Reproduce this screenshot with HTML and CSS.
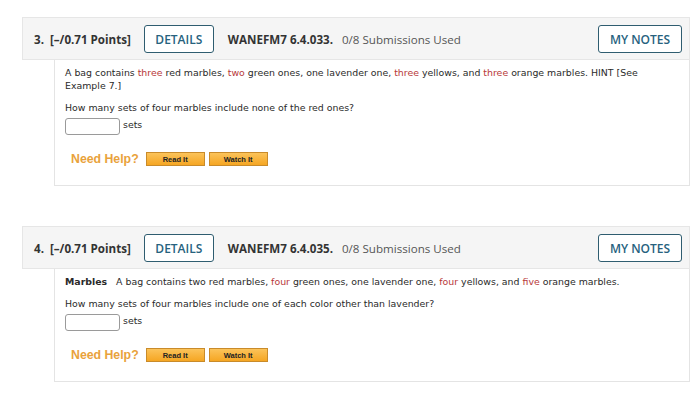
FILE: index.html
```html
<!DOCTYPE html>
<html lang="en">

<head>
    <meta charset="UTF-8">
    <title>Questions</title>
    <link rel="stylesheet" href="styles.css">
</head>

<body>
    <div class="question">
        <div class="q-header">
            <span class="q-points">3.&nbsp; [&ndash;/0.71 Points]</span>
            <button class="btn-outline details">DETAILS</button>
            <span class="q-code">WANEFM7 6.4.033.</span>
            <span class="q-subs">0/8 Submissions Used</span>
            <button class="btn-outline notes">MY NOTES</button>
        </div>
        <div class="q-body">
            <p>A bag contains <span class="red">three</span> red marbles, <span class="red">two</span> green ones, one lavender one, <span class="red">three</span> yellows, and <span class="red">three</span> orange marbles. HINT [See Example 7.]</p>
            <p class="prompt">How many sets of four marbles include none of the red ones?</p>
            <div class="answer">
                <input type="text" class="answer-box">
                <span>sets</span>
            </div>
            <div class="help">
                <span class="help-label">Need Help?</span>
                <button class="help-btn">Read It</button>
                <button class="help-btn">Watch It</button>
            </div>
        </div>
    </div>

    <div class="question">
        <div class="q-header">
            <span class="q-points">4.&nbsp; [&ndash;/0.71 Points]</span>
            <button class="btn-outline details">DETAILS</button>
            <span class="q-code">WANEFM7 6.4.035.</span>
            <span class="q-subs">0/8 Submissions Used</span>
            <button class="btn-outline notes">MY NOTES</button>
        </div>
        <div class="q-body">
            <p><b>Marbles</b>&nbsp;&nbsp; A bag contains two red marbles, <span class="red">four</span> green ones, one lavender one, <span class="red">four</span> yellows, and <span class="red">five</span> orange marbles.</p>
            <p class="prompt">How many sets of four marbles include one of each color other than lavender?</p>
            <div class="answer">
                <input type="text" class="answer-box">
                <span>sets</span>
            </div>
            <div class="help">
                <span class="help-label">Need Help?</span>
                <button class="help-btn">Read It</button>
                <button class="help-btn">Watch It</button>
            </div>
        </div>
    </div>
</body>

</html>
```

FILE: styles.css
```css
* {
    padding: 0;
    margin: 0;
    box-sizing: border-box;
}

body {
    background: #ffffff;
    padding-top: 17px;
    font-family: "DejaVu Sans", Verdana, sans-serif;
    color: #2a2a2a;
}

.question {
    margin-left: 22px;
    width: 668px;
}

.question + .question {
    margin-top: 40px;
}

.q-header {
    height: 43px;
    display: flex;
    align-items: center;
    padding: 1px 7px 0 11px;
    background: #f5f5f5;
    border: 1px solid #e6e6e6;
    font-family: "Open Sans", sans-serif;
    font-size: 11.6px;
    color: #333333;
}

.q-points {
    font-weight: 700;
}

.btn-outline {
    height: 28px;
    background: #ffffff;
    border: 1px solid #2f5d70;
    border-radius: 3px;
    font-family: "Open Sans", sans-serif;
    font-size: 12px;
    font-weight: 600;
    color: #27627e;
}

.details {
    width: 70px;
    margin-left: 13px;
}

.q-code {
    font-weight: 700;
    margin-left: 14px;
}

.q-subs {
    margin-left: 9px;
    color: #555555;
}

.notes {
    width: 84px;
    margin-left: auto;
}

.q-body {
    margin-left: 32px;
    border: 1px solid #e4e4e4;
    border-top: none;
    padding: 6px 30px 19px 10px;
    font-size: 9.4px;
    line-height: 13px;
}

.q-body p {
    margin-bottom: 9px;
}

.q-body p.prompt {
    margin-bottom: 4px;
}

.red {
    color: #b8383a;
}

.answer {
    display: flex;
    align-items: flex-start;
    gap: 3px;
}

.answer-box {
    width: 55px;
    height: 17px;
    border: 1px solid #9a9a9a;
    border-radius: 3px;
    background: #ffffff;
}

.help {
    display: flex;
    align-items: center;
    gap: 4px;
    margin-top: 17px;
    padding-left: 6px;
}

.help-label {
    font-family: "Liberation Sans", Arial, sans-serif;
    font-size: 12.3px;
    font-weight: 700;
    color: #e9a23b;
    margin-right: 3px;
}

.help-btn {
    width: 59px;
    height: 14px;
    background: linear-gradient(#fbc35a, #f5a623);
    border: 1px solid #c98b2a;
    font-family: "Liberation Sans", Arial, sans-serif;
    font-size: 7.5px;
    font-weight: 700;
    color: #222222;
}
```
